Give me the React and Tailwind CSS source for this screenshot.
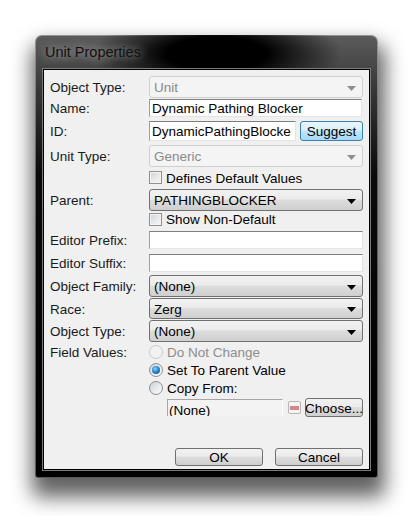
import React from "react";

const font = { fontFamily: '"Liberation Sans", Arial, sans-serif' };

function Arrow({ disabled }) {
  return (
    <svg width="9" height="5" viewBox="0 0 9 5" className="shrink-0">
      <polygon points="0,0 9,0 4.5,5" fill={disabled ? "#8f8f8f" : "#000"} />
    </svg>
  );
}

function Combo({ value, disabled, h = "h-[22px]" }) {
  if (disabled) {
    return (
      <div className={`${h} flex items-center justify-between pl-[4px] pr-[6px] pt-[2px] rounded-[3px] border border-[#cfcfcf] bg-[#f4f4f4] text-[#8a8a8a]`}>
        <span>{value}</span>
        <Arrow disabled />
      </div>
    );
  }
  return (
    <div className={`${h} flex items-center justify-between pl-[4px] pr-[6px] pt-[2px] rounded-[3px] border border-[#707070] bg-[linear-gradient(to_bottom,#f2f2f2_0%,#ebebeb_45%,#dddddd_50%,#cfcfcf_100%)] text-black`}>
      <span>{value}</span>
      <Arrow />
    </div>
  );
}

function TextBox({ value, className = "" }) {
  return (
    <div className={`h-[18px] flex items-center pt-[2px] pl-[2px] pr-[4px] bg-white border border-t-[#7f7f7f] border-l-[#a0a0a0] border-r-[#e3e3e3] border-b-[#e3e3e3] text-black ${className}`}>
      <div className="overflow-hidden whitespace-nowrap">{value}</div>
    </div>
  );
}

function Button({ children, className = "" }) {
  return (
    <div className={`flex items-center justify-center pt-[2px] rounded-[3px] border border-[#707070] bg-[linear-gradient(to_bottom,#f2f2f2_0%,#ebebeb_45%,#dddddd_50%,#cfcfcf_100%)] text-black ${className}`}>
      {children}
    </div>
  );
}

function Checkbox({ label }) {
  return (
    <div className="flex items-center gap-[4px]">
      <div className="w-[13px] h-[13px] border border-[#8e8f8f] bg-[linear-gradient(135deg,#cbcfd5_0%,#e6e8ea_50%,#f6f6f6_100%)] shadow-[inset_0_0_0_1px_#f4f4f4]" />
      <span className="text-black pt-[2px]">{label}</span>
    </div>
  );
}

function Radio({ label, checked, disabled }) {
  return (
    <div className="h-[18px] flex items-center gap-[4px]">
      <div
        className={`w-[14px] h-[14px] rounded-full border flex items-center justify-center ${
          disabled
            ? "border-[#c9c9c9] bg-[#f2f2f2]"
            : "border-[#8e8f8f] bg-[linear-gradient(135deg,#cbcfd5_0%,#eceeef_60%,#fafafa_100%)]"
        }`}
      >
        {checked && (
          <div className="w-[8px] h-[8px] rounded-full bg-[radial-gradient(circle_at_40%_35%,#8fd3f7_0%,#2a8ad4_45%,#0d3f73_100%)]" />
        )}
      </div>
      <span className={`pt-[2px] ${disabled ? "text-[#8d8d8d]" : "text-black"}`}>{label}</span>
    </div>
  );
}

function Row({ label, children, className = "" }) {
  return (
    <div className={`flex items-center ${className}`}>
      <div className="w-[99px] shrink-0 pt-[2px] text-[#1a1a1a]">{label}</div>
      <div className="flex-1">{children}</div>
    </div>
  );
}

export default function App() {
  return (
    <div className="min-h-screen w-[413px] h-[516px] bg-white pl-[35px] pt-[35px] text-[13.5px] leading-none" style={font}>
      <div className="w-[343px] h-[443px] rounded-t-[7px] rounded-b-[3px] flex flex-col bg-[linear-gradient(to_bottom,#5c5c5c_0px,#3a3a3a_50px,#0a0a0a_140px,#000_100%)] shadow-[inset_0_0_0_1px_rgba(255,255,255,0.35),2px_14px_20px_5px_rgba(0,0,0,0.62)]">
        {/* Title bar */}
        <div className="h-[34px] shrink-0 pl-[10px] flex items-center rounded-t-[7px] bg-[radial-gradient(ellipse_125px_42px_at_53%_55%,#000_0%,#000_40%,rgba(0,0,0,0)_100%)]">
          <span className="text-[14.5px] text-[#111] [text-shadow:0_0_8px_rgba(255,255,255,0.55),0_0_14px_rgba(255,255,255,0.4)]">
            Unit Properties
          </span>
        </div>

        {/* Client area */}
        <div className="mx-[8px] mb-[8px] flex-1 border border-black bg-[#f0f0f0] px-[6px] pt-[6px] flex flex-col shadow-[0_0_0_1px_#7a7a7a]">
          <Row label="Object Type:">
            <Combo value="Unit" disabled />
          </Row>
          <Row label="Name:" className="mt-[1px]">
            <TextBox value="Dynamic Pathing Blocker" className="w-[213px]" />
          </Row>
          <Row label="ID:" className="mt-[4px]">
            <div className="flex items-center gap-[4px]">
              <TextBox value="DynamicPathingBlocker" className="w-[147px] h-[20px]" />
              <div className="h-[20px] flex-1 flex items-center justify-center pt-[2px] rounded-[3px] border border-[#3c7fb1] bg-[linear-gradient(to_bottom,#eaf6fd_0%,#d9f0fc_45%,#bee6fd_50%,#a7d9f5_100%)] text-black">
                Suggest
              </div>
            </div>
          </Row>
          <Row label="Unit Type:" className="mt-[4px]">
            <Combo value="Generic" disabled />
          </Row>
          <Row label="" className="mt-[2px] h-[17px]">
            <Checkbox label="Defines Default Values" />
          </Row>
          <Row label="Parent:" className="mt-[3px]">
            <Combo value="PATHINGBLOCKER" />
          </Row>
          <Row label="" className="mt-[1px] h-[14px]">
            <Checkbox label="Show Non-Default" />
          </Row>
          <Row label="Editor Prefix:" className="mt-[5px]">
            <TextBox value="" />
          </Row>
          <Row label="Editor Suffix:" className="mt-[5px]">
            <TextBox value="" />
          </Row>
          <Row label="Object Family:" className="mt-[3px]">
            <Combo value="(None)" />
          </Row>
          <Row label="Race:" className="mt-[1px]">
            <Combo value="Zerg" h="h-[21px]" />
          </Row>
          <Row label="Object Type:" className="mt-[1px]">
            <Combo value="(None)" />
          </Row>

          <div className="flex mt-[1px]">
            <div className="w-[99px] shrink-0 h-[18px] pt-[2px] flex items-center text-[#1a1a1a]">Field Values:</div>
            <div className="flex flex-col">
              <Radio label="Do Not Change" disabled />
              <Radio label="Set To Parent Value" checked />
              <Radio label="Copy From:" />
            </div>
          </div>

          <div className="flex items-center mt-[1px] pl-[117px]">
            <div className="w-[116px] h-[17px] overflow-hidden border-t border-l border-[#a5a5a5] border-r border-r-white bg-[#f3f3f3] pl-[1px] pt-[4px] text-black">
              (None)
            </div>
            <div className="ml-[5px] w-[13px] h-[13px] rounded-[2px] border border-[#b5b5b5] bg-[#f4f4f4] flex items-center justify-center">
              <div className="w-[9px] h-[4px] bg-[#d98585]" />
            </div>
            <Button className="ml-[4px] w-[58px] h-[19px]">Choose...</Button>
          </div>

          <div className="flex justify-end gap-[12px] mt-[31px]">
            <Button className="w-[88px] h-[18px]">OK</Button>
            <Button className="w-[88px] h-[18px]">Cancel</Button>
          </div>
        </div>
      </div>
    </div>
  );
}
